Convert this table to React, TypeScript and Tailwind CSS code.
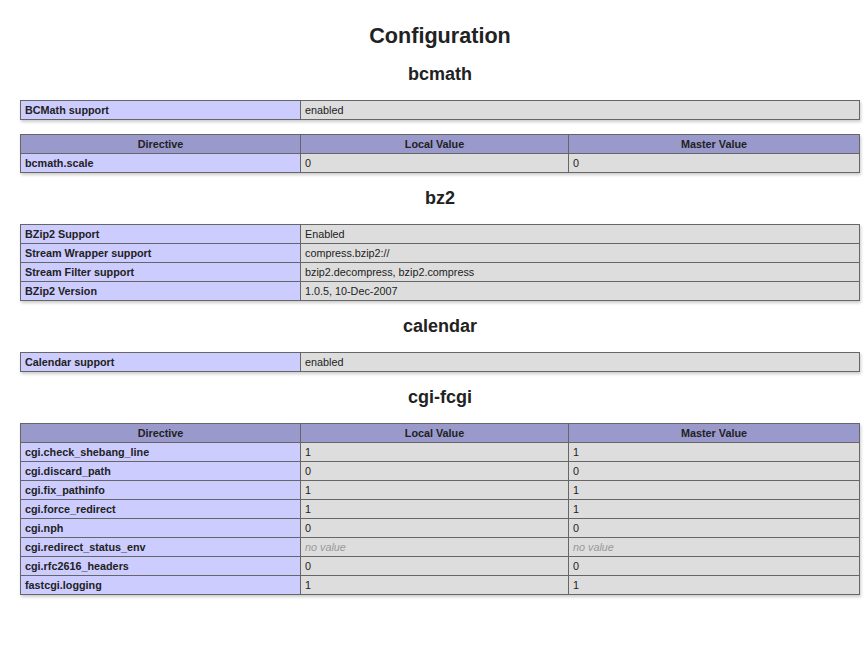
type Row = string[];

const font = { fontFamily: '"Liberation Sans", Arial, sans-serif' };

function Cell({ value, kind }: { value: string; kind: 'e' | 'v' | 'h' }) {
  if (kind === 'h') {
    return (
      <div className="bg-[#9999cc] h-[18px] leading-[18px] px-[4px] text-center font-bold">
        {value}
      </div>
    );
  }
  if (kind === 'e') {
    return (
      <div className="bg-[#ccccff] h-[18px] leading-[18px] px-[4px] font-bold truncate">
        {value}
      </div>
    );
  }
  return (
    <div className="bg-[#dddddd] h-[18px] leading-[18px] px-[4px] truncate">
      {value === 'no value' ? <i className="text-[#999999]">no value</i> : value}
    </div>
  );
}

function InfoTable({ rows, header }: { rows: Row[]; header?: Row }) {
  const cols = (header ?? rows[0]).length;
  const grid = cols === 3 ? 'grid-cols-[279px_267px_290px]' : 'grid-cols-[279px_558px]';
  return (
    <div
      className={`grid ${grid} gap-px p-px bg-[#666666] w-[840px] mb-[14px] shadow-[1px_2px_3px_#cccccc] text-[10.8px] text-[#222222]`}
    >
      {header && header.map((h) => <Cell key={h} value={h} kind="h" />)}
      {rows.map((r, i) =>
        r.map((c, j) => <Cell key={`${i}-${j}`} value={c} kind={j === 0 ? 'e' : 'v'} />)
      )}
    </div>
  );
}

function Heading({ children }: { children: string }) {
  return (
    <h2 className="h-[20px] leading-[22px] text-[18px] font-bold text-center text-[#222222] mb-[17px]">
      {children}
    </h2>
  );
}

const directive = ['Directive', 'Local Value', 'Master Value'];

const cgi: Row[] = [
  ['cgi.check_shebang_line', '1', '1'],
  ['cgi.discard_path', '0', '0'],
  ['cgi.fix_pathinfo', '1', '1'],
  ['cgi.force_redirect', '1', '1'],
  ['cgi.nph', '0', '0'],
  ['cgi.redirect_status_env', 'no value', 'no value'],
  ['cgi.rfc2616_headers', '0', '0'],
  ['fastcgi.logging', '1', '1'],
];

export default function App() {
  return (
    <div className="w-[868px] h-[648px] bg-white overflow-hidden" style={font}>
      <div className="ml-[20px] w-[840px] pt-[23px]">
        <h1 className="h-[26px] leading-[26px] text-[21.6px] font-bold text-center text-[#222222] mb-[14px]">
          Configuration
        </h1>

        <Heading>bcmath</Heading>
        <InfoTable rows={[['BCMath support', 'enabled']]} />
        <InfoTable header={directive} rows={[['bcmath.scale', '0', '0']]} />

        <Heading>bz2</Heading>
        <InfoTable
          rows={[
            ['BZip2 Support', 'Enabled'],
            ['Stream Wrapper support', 'compress.bzip2://'],
            ['Stream Filter support', 'bzip2.decompress, bzip2.compress'],
            ['BZip2 Version', '1.0.5, 10-Dec-2007'],
          ]}
        />

        <Heading>calendar</Heading>
        <InfoTable rows={[['Calendar support', 'enabled']]} />

        <Heading>cgi-fcgi</Heading>
        <InfoTable header={directive} rows={cgi} />
      </div>
    </div>
  );
}
